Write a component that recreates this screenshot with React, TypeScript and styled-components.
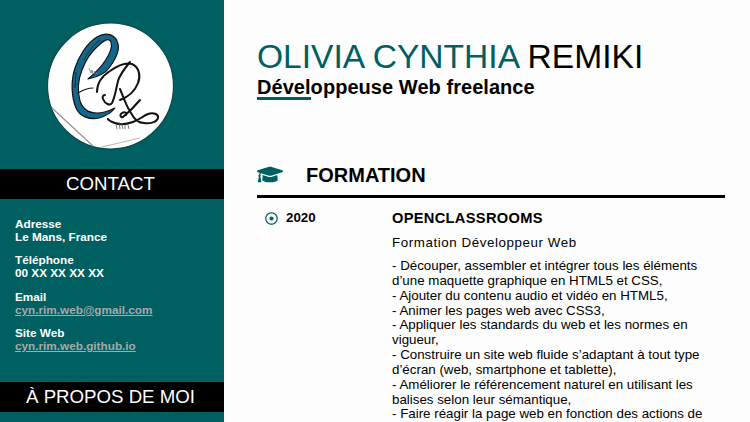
import styled, { createGlobalStyle } from 'styled-components';
import { FaGraduationCap, FaRegDotCircle } from 'react-icons/fa';

const GlobalStyle = createGlobalStyle`
  html, body {
    margin: 0;
    height: 100%;
    overflow: hidden;
    background: #fdfdfd;
    font-family: "Liberation Sans", Arial, sans-serif;
  }
`;

const teal = '#005f61';

const Page = styled.div`
  display: flex;
  height: 422px;
  overflow: hidden;
`;

const Sidebar = styled.aside`
  width: 224px;
  flex-shrink: 0;
  background: ${teal};
  color: #fff;
  display: flex;
  flex-direction: column;
`;

const LogoWrap = styled.div`
  height: 169px;
  padding: 22px 0 0 47px;
  box-sizing: border-box;
`;

const LogoCircle = styled.svg`
  display: block;
  width: 128px;
  height: 128px;
`;

const Band = styled.h2`
  margin: 0;
  padding-right: 3px;
  background: #000;
  color: #fff;
  font-size: 18.67px;
  font-weight: 400;
  text-align: center;
  height: 30px;
  line-height: 29px;
`;

const ContactList = styled.div`
  padding: 18px 15px 0;
  height: 183px;
  box-sizing: border-box;
  display: flex;
  flex-direction: column;
  gap: 10.45px;
`;

const ContactItem = styled.div`
  font-size: 11.75px;
  font-weight: 700;
  line-height: 13px;
`;

const ContactLink = styled.a`
  display: block;
  color: #a9a9a9;
  text-decoration: underline;
`;

const Main = styled.main`
  flex: 1;
  min-width: 0;
  padding: 37px 25px 0 33px;
`;

const Name = styled.h1`
  margin: 0;
  font-size: 33.6px;
  font-weight: 400;
  line-height: 39px;
  color: #000;
`;

const Accent = styled.span`
  color: ${teal};
`;

const Role = styled.p`
  position: relative;
  margin: 0;
  font-size: 20px;
  font-weight: 700;
  line-height: 23px;
  letter-spacing: 0.05px;
  color: #000;
  &::after {
    content: '';
    position: absolute;
    left: 0;
    top: 21px;
    width: 54px;
    height: 3px;
    background: ${teal};
  }
`;

const SectionHead = styled.div`
  display: flex;
  align-items: center;
  margin-top: 56px;
  height: 40px;
  border-bottom: 3px solid #000;
  gap: 23px;
  box-sizing: content-box;
`;

const SectionTitle = styled.h2`
  margin: 0;
  font-size: 20px;
  font-weight: 700;
  color: #000;
`;

const HatIcon = styled(FaGraduationCap)`
  width: 26px;
  height: 21px;
  margin-bottom: 2px;
  color: ${teal};
`;

const Entry = styled.div`
  display: grid;
  grid-template-columns: 135px 1fr;
  padding-top: 12px;
`;

const DateCell = styled.div`
  display: flex;
  align-items: center;
  align-self: start;
  gap: 8px;
  padding-left: 8px;
  font-size: 13.33px;
  font-weight: 700;
  line-height: 16px;
`;

const Bullet = styled(FaRegDotCircle)`
  width: 13px;
  height: 13px;
  color: ${teal};
`;

const School = styled.h3`
  margin: 0;
  font-size: 14.67px;
  font-weight: 700;
  line-height: 16px;
  letter-spacing: 0.3px;
`;

const Diploma = styled.p`
  margin: 9px 0 8px;
  font-size: 13.33px;
  line-height: 16px;
  letter-spacing: 0.58px;
`;

const Tasks = styled.p`
  margin: 0;
  font-size: 13.33px;
  line-height: 14.85px;
`;

const tasks = [
  '- Découper, assembler et intégrer tous les éléments d’une maquette graphique en HTML5 et CSS,',
  '- Ajouter du contenu audio et vidéo en HTML5,',
  '- Animer les pages web avec CSS3,',
  '- Appliquer les standards du web et les normes en vigueur,',
  '- Construire un site web fluide s’adaptant à tout type d’écran (web, smartphone et tablette),',
  '- Améliorer le référencement naturel en utilisant les balises selon leur sémantique,',
  '- Faire réagir la page web en fonction des actions de',
];

function Logo() {
  return (
    <LogoCircle viewBox="0 0 128 128">
      <circle cx="63.5" cy="64" r="63" fill="#fff" stroke="#0b4a4c" strokeWidth="1.2" />
      {/* curled paper corner */}
      <path d="M5 86 L46 124" stroke="#8f8f8f" strokeWidth="1.1" fill="none" />
      <path d="M55 125 L93 116" stroke="#b8b8b8" strokeWidth="1.1" fill="none" />
      {/* big C */}
      <path
        d="M41 57 C50 55 58 52 62 46 C68 38 73 30 71 22 C69 13 60 9 50 15 C40 21 32 34 28 46 C24 58 24 74 29 86 C33 95 43 98 52 96 C59 94 65 90 68 86 C62 89 56 91 50 91 C42 91 36 88 33 79 C30 68 31 58 35 48 C39 37 45 29 52 23 C56 19 62 15 64 20 C66 26 62 33 58 39 C54 45 47 52 41 57 Z"
        fill="#14668a"
        stroke="#111"
        strokeWidth="1.2"
        strokeLinejoin="round"
      />
      <path d="M31 71 C36 68 41 66 46 66" stroke="#111" strokeWidth="1.2" fill="none" strokeLinecap="round" />
      <path d="M53 18 C47 22 41 30 37 38 M29 50 L28 66" stroke="#0b2f3f" strokeWidth="1" fill="none" />
      {/* R with its tail */}
      <path
        d="M50 70 C50 61 55 54 63 49 C70 44 79 40 85 42 C92 45 94 54 91 61 C88 69 81 75 73 78 M83 40 C78 46 73 52 71 59 C69 67 68 75 65 81 C63 84 58 82 56 77 C55 75 56 73 58 73 M73 67 C76 74 79 84 84 91 C87 97 91 101 97 101 C103 102 110 100 111 96 C112 92 106 90 101 92 C96 94 92 98 86 100 C80 102 73 103 68 101 C65 100 62 99 61 97 M93 78 C88 84 82 90 76 95 C74 96 72 93 75 91 C78 89 80 91 79 93"
        stroke="#111"
        strokeWidth="2"
        fill="none"
        strokeLinecap="round"
        strokeLinejoin="round"
      />
      {/* small handwritten marks */}
      <path d="M42 46 l2 5 l1 -3 l1 4 M47 49 l1 3 M49 50 l1 2" stroke="#777" strokeWidth="0.8" fill="none" />
      <path d="M69 102 l1 5 M72 100 l1 7 M75 102 l1 5 M78 103 l0 4 M81 103 l1 4" stroke="#555" strokeWidth="0.8" fill="none" />
    </LogoCircle>
  );
}

export default function App() {
  return (
    <Page>
      <GlobalStyle />
      <Sidebar>
        <LogoWrap>
          <Logo />
        </LogoWrap>
        <Band>CONTACT</Band>
        <ContactList>
          <ContactItem>
            Adresse
            <br />
            Le Mans, France
          </ContactItem>
          <ContactItem>
            Téléphone
            <br />
            00 XX XX XX XX
          </ContactItem>
          <ContactItem>
            Email
            <ContactLink href="#">cyn.rim.web@gmail.com</ContactLink>
          </ContactItem>
          <ContactItem>
            Site Web
            <ContactLink href="#">cyn.rim.web.github.io</ContactLink>
          </ContactItem>
        </ContactList>
        <Band>À PROPOS DE MOI</Band>
      </Sidebar>
      <Main>
        <Name>
          <Accent>OLIVIA CYNTHIA</Accent> REMIKI
        </Name>
        <Role>Développeuse Web freelance</Role>
        <SectionHead>
          <HatIcon />
          <SectionTitle>FORMATION</SectionTitle>
        </SectionHead>
        <Entry>
          <DateCell>
            <Bullet />
            2020
          </DateCell>
          <div>
            <School>OPENCLASSROOMS</School>
            <Diploma>Formation Développeur Web</Diploma>
            <Tasks>
              {tasks.map(t => (
                <span key={t}>
                  {t}
                  <br />
                </span>
              ))}
            </Tasks>
          </div>
        </Entry>
      </Main>
    </Page>
  );
}
